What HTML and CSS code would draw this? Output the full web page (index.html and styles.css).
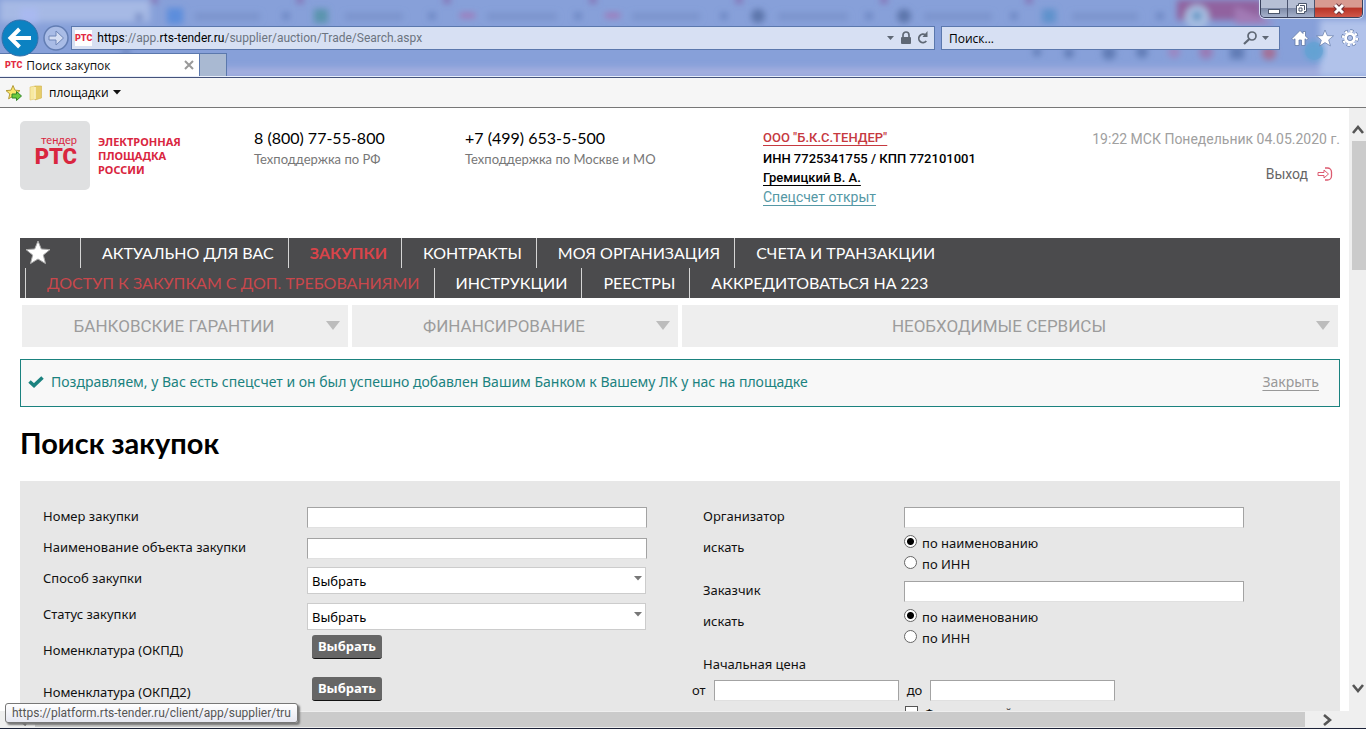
FILE: index.html
```html
<!DOCTYPE html>
<html lang="ru">
<head>
<meta charset="utf-8">
<title>Поиск закупок</title>
<link rel="stylesheet" href="styles.css">
</head>
<body>
<div class="window">
  <header class="chrome">
    <svg class="glass" width="1366" height="77" aria-hidden="true">
      <defs><filter id="soft" x="-20%" y="-20%" width="140%" height="140%"><feGaussianBlur stdDeviation="3"/></filter></defs>
      <g filter="url(#soft)">
        <rect x="0" y="0" width="150" height="22" fill="#b4c4ea" opacity=".7"/>
        <rect x="20" y="8" width="18" height="16" fill="#a9b9f0"/>
        <rect x="167" y="8" width="16" height="16" fill="#5b8ddc"/>
        <rect x="314" y="9" width="14" height="14" fill="#5a94ad"/>
        <rect x="460" y="13" width="15" height="5" fill="#a276b6"/>
        <rect x="605" y="13" width="15" height="5" fill="#a276b6"/>
        <circle cx="758" cy="16" r="7" fill="#5c74aa"/>
        <circle cx="904" cy="16" r="7" fill="#5c74aa"/>
        <rect x="1042" y="9" width="14" height="14" fill="#5e92cc"/>
        <g fill="#7890c9" opacity=".8"><rect x="195" y="13" width="65" height="7"/><rect x="345" y="13" width="58" height="7"/><rect x="487" y="13" width="70" height="7"/><rect x="632" y="13" width="68" height="7"/><rect x="778" y="13" width="70" height="7"/><rect x="924" y="13" width="68" height="7"/><rect x="1072" y="13" width="66" height="7"/></g>
        <g fill="#6680bd" opacity=".8"><circle cx="139" cy="17" r="4"/><circle cx="286" cy="16" r="4"/><circle cx="432" cy="16" r="4"/><circle cx="578" cy="16" r="4"/><circle cx="724" cy="16" r="4"/><circle cx="869" cy="16" r="4"/><circle cx="1014" cy="16" r="4"/><circle cx="1160" cy="16" r="4"/></g>
        <g fill="#8562a6" opacity=".7"><circle cx="154" cy="0" r="4"/><circle cx="300" cy="0" r="4"/><circle cx="447" cy="0" r="4"/><circle cx="593" cy="0" r="4"/><circle cx="739" cy="0" r="4"/><circle cx="884" cy="0" r="4"/><circle cx="1029" cy="0" r="4"/></g>
        <path d="M1177 0H1262V20H1177Z" fill="#91629f"/>
        <path d="M1235 6L1275 24H1235Z" fill="#a27ab5"/>
        <circle cx="1197" cy="17" r="12" fill="#a9bfe2"/>
        <circle cx="1197" cy="16" r="5" fill="#6597c4"/>
        <rect x="0" y="68" width="1366" height="9" fill="#a5afdf"/>
        <rect x="1320" y="20" width="60" height="57" fill="#b1c2ea"/>
        <g fill="#617bb5"><circle cx="1037" cy="52" r="4"/><circle cx="1069" cy="53" r="5"/><circle cx="1109" cy="53" r="7"/><circle cx="1142" cy="52" r="6"/><rect x="1230" y="46" width="14" height="13"/></g>
        <circle cx="1174" cy="52" r="6" fill="#9b87c2"/><circle cx="1206" cy="52" r="7" fill="#997bb6"/><circle cx="1269" cy="53" r="7" fill="#a46f96"/>
        <circle cx="126" cy="52" r="4" fill="#6a83bd"/>
      </g>
      <circle cx="1314" cy="51" r="10" fill="#64a2d3" filter="url(#soft)"/>
      <circle cx="1314" cy="51" r="9" fill="#64a2d3" opacity=".6"/>
    </svg>
    <div class="titlebar">
      <div class="winbtns">
        <button class="winbtn" aria-label="Свернуть"><svg width="14" height="12"><rect x="1.500" y="6.500" width="11" height="4" fill="#fff" stroke="#4b566b"/></svg></button>
        <button class="winbtn" aria-label="Восстановить"><svg width="14" height="14"><path d="M4.500 1.500h8v8h-2v2h-8v-8h2z" fill="#fff" stroke="#4b566b"/><path d="M5 6h3v3H5zM6 3.500h4.500V8" fill="none" stroke="#4b566b"/></svg></button>
        <button class="winbtn winclose" aria-label="Закрыть окно"><svg width="14" height="12"><path d="M3 2L11 10M11 2L3 10" stroke="#6a3339" stroke-width="5"/><path d="M3 2L11 10M11 2L3 10" stroke="#fff" stroke-width="3"/></svg></button>
      </div>
    </div>
    <div class="addrrow">
      <button class="back" aria-label="Назад"><svg width="38" height="38"><circle cx="19" cy="19" r="18" fill="#0c82c2" stroke="#3570ab"/><path d="M9.500 19H30M18.500 10L9.500 19L18.500 28" fill="none" stroke="#fff" stroke-width="4"/></svg></button>
      <button class="forward" aria-label="Вперёд"><svg width="26" height="26"><circle cx="13" cy="13" r="12" fill="#a9bce6" stroke="#627db3" stroke-width="1.500"/><path d="M6 11h7V6l7.500 7-7.500 7v-5H6z" fill="#d5def3" stroke="#6e86b8"/></svg></button>
      <div class="address">
        <span class="favicon">РТС</span>
        <span class="url"><b>https</b>://app.<b>rts-tender.ru</b>/supplier/auction/Trade/Search.aspx</span>
        <button aria-label="Журнал адресов"><svg width="8" height="6"><path d="M0 1h7L3.500 5z" fill="#5f6875"/></svg></button>
        <svg width="12" height="14"><path d="M3 6V4a3 3 0 0 1 6 0v2" fill="none" stroke="#5f6875" stroke-width="1.700"/><rect x="1" y="6" width="10" height="7" rx="1" fill="#5f6875"/></svg>
        <button aria-label="Обновить"><svg width="12" height="14"><path d="M9.300 10A4.200 4.200 0 1 1 8.500 4" fill="none" stroke="#5f6875" stroke-width="1.800"/><path d="M10.500 0v6H5.500z" fill="#5f6875"/></svg></button>
      </div>
      <div class="search">
        <input type="text" value="Поиск..." aria-label="Поиск">
        <button aria-label="Найти"><svg width="15" height="14"><circle cx="9" cy="5" r="4" fill="none" stroke="#5f6875" stroke-width="1.700"/><path d="M6.300 8L1 13" stroke="#5f6875" stroke-width="2.200"/></svg></button>
        <button aria-label="Выбор поиска"><svg width="8" height="6"><path d="M0 1h7L3.500 5z" fill="#5f6875"/></svg></button>
      </div>
      <div class="tools">
        <button aria-label="Домой"><svg width="18" height="18"><path d="M9 1.500L1 9.500l1.500 1.500L4 9.800V16.500h4V11h2.500v5.500H14V9.800l1.500 1.200L17 9.500 14.500 7V2.500h-2.500V4.500z" fill="#fff" stroke="#6279a6" stroke-width=".8"/></svg></button>
        <button aria-label="Избранное"><svg width="18" height="18"><path d="M9 1l2.300 5.600 6.200.3-4.800 4 1.700 6L9 13.600 3.600 17l1.700-6-4.800-4 6.200-.4z" fill="#fff" stroke="#6279a6" stroke-width=".7"/></svg></button>
        <button aria-label="Сервис"><svg width="18" height="18"><circle cx="9" cy="9" r="6.800" fill="none" stroke="#6279a6" stroke-width="3.800" stroke-dasharray="3 2.340"/><circle cx="9" cy="9" r="6.800" fill="none" stroke="#fff" stroke-width="2.600" stroke-dasharray="2.500 2.840"/><circle cx="9" cy="9" r="4.300" fill="none" stroke="#fff" stroke-width="3"/><circle cx="9" cy="9" r="2.600" fill="none" stroke="#6279a6" stroke-width=".8"/></svg></button>
      </div>
    </div>
    <div class="tabs">
      <div class="tab"><span class="favicon">РТС</span><span class="tabname">Поиск закупок</span><button aria-label="Закрыть вкладку"><svg width="10" height="10"><path d="M1 1l8 8M9 1L1 9" stroke="#999" stroke-width="2"/></svg></button></div>
      <button class="newtab" aria-label="Новая вкладка"></button>
    </div>
  </header>
  <div class="favbar">
    <button aria-label="Добавить в избранное"><svg width="18" height="18"><path d="M8 1.500l2 4.700 5 .4-3.800 3.300 1.200 4.900L8 12.200 3.600 14.800l1.200-4.900L1 6.600l5-.4z" fill="#fbe76a" stroke="#b39a38"/><path d="M7 10h4.500V7.500L16.500 12l-5 4.500V14H7z" fill="#6bcb3c" stroke="#33852a"/></svg></button>
    <svg width="14" height="16"><path d="M1 2l5-1v13l-5 1z" fill="#f7e9a0" stroke="#dfc468" stroke-width=".6"/><path d="M6 1h6.500v12L6 15z" fill="#e6cd69" stroke="#d1b24c" stroke-width=".6"/><path d="M6 2v12" stroke="#fff6cf" stroke-width="1.500"/></svg>
    <button class="favfolder">площадки <svg width="8" height="5"><path d="M0 0h8L4 4.500z" fill="#111"/></svg></button>
  </div>
  <div class="viewport">
    <main class="page">
      <div class="head">
        <a class="logo" href="#">
          <span class="badge"><small>тендер</small><strong>РТС</strong></span>
          <span class="slogan">ЭЛЕКТРОННАЯ<br>ПЛОЩАДКА<br>РОССИИ</span>
        </a>
        <div class="phone"><div class="num">8 (800) 77-55-800</div><div class="note">Техподдержка по РФ</div></div>
        <div class="phone"><div class="num">+7 (499) 653-5-500</div><div class="note">Техподдержка по Москве и МО</div></div>
        <div class="firm">
          <a class="firmname" href="#">ООО "Б.К.С.ТЕНДЕР"</a>
          <span>ИНН 7725341755 / КПП 772101001</span>
          <a class="user" href="#">Гремицкий В. А.</a>
          <a class="account" href="#">Спецсчет открыт</a>
        </div>
        <div class="session">
          <span class="clock">19:22 МСК Понедельник 04.05.2020 г.</span>
          <a class="exit" href="#">Выход <svg width="16" height="16"><path d="M8 2h2.500a4 4 0 0 1 4 4v4a4 4 0 0 1-4 4H8" fill="none" stroke="#dc5b70" stroke-width="1.300"/><path d="M1 6.500h6V4l4.500 4L7 12V9.500H1z" fill="#fff" stroke="#dc5b70"/></svg></a>
        </div>
      </div>
      <nav class="menu">
        <div class="row">
          <a class="star" href="#" aria-label="Избранное"><svg width="26" height="26"><path d="M13 1l3.300 8 8.700.6-6.700 5.500 2.200 8.500-7.500-4.600-7.500 4.600 2.200-8.500L1 9.600 9.700 9z" fill="#fff" stroke="#aaa"/></svg></a>
          <a href="#">АКТУАЛЬНО ДЛЯ ВАС</a><a class="current" href="#">ЗАКУПКИ</a><a href="#">КОНТРАКТЫ</a><a href="#">МОЯ ОРГАНИЗАЦИЯ</a><a href="#">СЧЕТА И ТРАНЗАКЦИИ</a>
        </div>
        <div class="row second">
          <a class="accent" href="#">ДОСТУП К ЗАКУПКАМ С ДОП. ТРЕБОВАНИЯМИ</a><a href="#">ИНСТРУКЦИИ</a><a href="#">РЕЕСТРЫ</a><a href="#">АККРЕДИТОВАТЬСЯ НА 223</a>
        </div>
      </nav>
      <div class="services">
        <button><span>БАНКОВСКИЕ ГАРАНТИИ</span><svg width="14" height="10"><path d="M0 0h14L7 9z" fill="#bcbcbc"/></svg></button>
        <button><span>ФИНАНСИРОВАНИЕ</span><svg width="14" height="10"><path d="M0 0h14L7 9z" fill="#bcbcbc"/></svg></button>
        <button class="double"><span>НЕОБХОДИМЫЕ СЕРВИСЫ</span><svg width="14" height="10"><path d="M0 0h14L7 9z" fill="#bcbcbc"/></svg></button>
      </div>
      <div class="notice">
        <svg width="16" height="12"><path d="M1.500 5.500L6 9.500L14.500 1.500" fill="none" stroke="#1b827f" stroke-width="3.600"/></svg>
        <span>Поздравляем, у Вас есть спецсчет и он был успешно добавлен Вашим Банком к Вашему ЛК у нас на площадке</span>
        <a href="#">Закрыть</a>
      </div>
      <h1>Поиск закупок</h1>
      <form class="filters">
        <div class="col left">
          <div class="field"><label for="num">Номер закупки</label><input id="num" type="text"></div>
          <div class="field"><label for="obj">Наименование объекта закупки</label><input id="obj" type="text"></div>
          <div class="field tall"><label for="way">Способ закупки</label><span class="pick"><select id="way"><option>Выбрать</option></select><svg width="8" height="5"><path d="M0 0h8L4 4.500z" fill="#777"/></svg></span></div>
          <div class="field tall"><label for="state">Статус закупки</label><span class="pick"><select id="state"><option>Выбрать</option></select><svg width="8" height="5"><path d="M0 0h8L4 4.500z" fill="#777"/></svg></span></div>
          <div class="field wide"><label for="okpd">Номенклатура (ОКПД)</label><button id="okpd" type="button">Выбрать</button></div>
          <div class="field wide"><label for="okpd2">Номенклатура (ОКПД2)</label><button id="okpd2" type="button">Выбрать</button></div>
        </div>
        <div class="col right">
          <div class="field"><label for="org">Организатор</label><input id="org" type="text"></div>
          <div class="field by"><span class="label">искать</span><div class="radios"><label><input type="radio" name="org" checked>по наименованию</label><label><input type="radio" name="org">по ИНН</label></div></div>
          <div class="field"><label for="cust">Заказчик</label><input id="cust" type="text"></div>
          <div class="field by"><span class="label">искать</span><div class="radios"><label><input type="radio" name="cust" checked>по наименованию</label><label><input type="radio" name="cust">по ИНН</label></div></div>
          <div class="field"><span class="label">Начальная цена</span></div>
          <div class="price"><label for="from">от</label><input id="from" type="text"><label for="to">до</label><input id="to" type="text"></div>
          <label class="check"><input type="checkbox">Федеральный</label>
        </div>
      </form>
    </main>
    <div class="vscroll">
      <svg width="12" height="9"><path d="M1 8L6 2l5 6" fill="none" stroke="#555" stroke-width="2.600"/></svg>
      <div class="vthumb"></div>
      <svg width="12" height="9"><path d="M1 1l5 6 5-6" fill="none" stroke="#555" stroke-width="2.600"/></svg>
    </div>
  </div>
  <div class="hscroll">
    <svg width="9" height="12"><path d="M8 1L2 6l6 5" fill="none" stroke="#555" stroke-width="2.600"/></svg>
    <div class="hthumb"></div>
    <svg width="9" height="12"><path d="M1 1l6 5-6 5" fill="none" stroke="#555" stroke-width="2.600"/></svg>
  </div>
  <div class="status">https://platform.rts-tender.ru/client/app/supplier/tru</div>
</div>
</body>
</html>
```
FILE: styles.css
```css
* { box-sizing: border-box; }
body { margin: 0; font-family: "Noto Sans", "Open Sans", sans-serif; font-size: 13px; color: #111; }
button { font: inherit; padding: 0; border: 0; background: none; display: flex; align-items: center; justify-content: center; }
input { font: inherit; }
svg { flex: none; display: block; }

.window { position: relative; height: 100vh; display: flex; flex-direction: column; overflow: hidden; border-bottom: 1px solid #1c2238; background: #fff; }

/* Browser frame */
.chrome { position: relative; background: #87a0d9; border-bottom: 1px solid #44527a; font-family: "Open Sans", sans-serif; font-size: 12px; }
.glass { position: absolute; left: 0; top: 0; width: 100%; height: 77px; }
.titlebar { position: relative; height: 26px; display: flex; justify-content: flex-end; padding-right: 3px; }
.winbtns { display: flex; height: 18px; border: 1px solid #39415c; border-top: 0; border-radius: 0 0 5px 5px; overflow: hidden; box-shadow: 0 0 0 1px #d3ddf2; }
.winbtn { width: 27px; border-right: 1px solid #4a536d; background: linear-gradient(#b6bfd4 45%, #7f8ba8 50%, #a6b2cc); }
.winclose { width: 47px; border-right: 0; background: linear-gradient(#d89a90 40%, #b93528 50%, #d0584a); }
.addrrow { position: relative; z-index: 1; height: 24px; display: flex; align-items: center; padding: 0 7px 0 1px; }
.back { width: 38px; margin: -7px 4px -7px 0; }
.forward { width: 26px; margin-right: 2px; }
.address, .search { height: 24px; display: flex; align-items: center; border: 1px solid #5b78ad; background: #d7e0f3; }
.address { flex: 1; padding: 0 5px 0 3px; gap: 5px; }
.url { flex: 1; color: #6c7480; white-space: nowrap; font-family: Roboto, sans-serif; }
.url b { font-weight: 400; color: #000; }
.favicon { font: 900 9px Roboto, sans-serif; color: #e22b43; background: #fff; line-height: 16px; }
.search { width: 339px; margin: 0 11px 0 6px; padding: 0 9px 0 7px; gap: 4px; }
.search input { flex: 1; min-width: 0; padding: 0; border: 0; background: none; color: #000; }
.tools { display: flex; gap: 7px; }
.tabs { position: relative; display: flex; height: 27px; padding-top: 3px; border-bottom: 1px solid #e8eefa; }
.tab { width: 200px; display: flex; align-items: center; gap: 4px; padding: 0 5px; background: #fff; border: 1px solid #5b78ad; border-width: 1px 1px 0 0; }
.tabname { flex: 1; }
.newtab { width: 27px; background: #a9b9d2; border: 1px solid #5b78ad; border-width: 1px 1px 0 0; }
.favbar { height: 30px; display: flex; align-items: center; gap: 6px; padding: 0 5px; background: #f6f6f6; border-bottom: 1px solid #777; font-family: "Open Sans", sans-serif; font-size: 12px; }
.favfolder { gap: 4px; }

.viewport { flex: 1; min-height: 0; display: flex; }
.page { flex: 1; min-width: 0; overflow: hidden; padding: 0 9px 0 20px; }

/* Site header */
.head { display: grid; grid-template-columns: 234px 211px 298px 1fr auto; min-height: 130px; padding-top: 13px; }
.logo { display: flex; align-items: center; align-self: start; gap: 8px; color: #d9263f; text-decoration: none; }
.badge { width: 70px; height: 69px; border-radius: 5px; background: #dfe0e1; display: flex; flex-direction: column; align-items: flex-end; padding: 12px 13px 0 0; }
.badge small { font: 11px Lato, sans-serif; line-height: 14px; }
.badge strong { font: 900 22px Roboto, sans-serif; line-height: 20px; }
.slogan { font: 700 11px "Noto Sans", sans-serif; line-height: 14px; }
.phone { padding-top: 7px; }
.num { font: 16px Lato, sans-serif; line-height: 20px; color: #000; }
.note { font: 13px Lato, sans-serif; line-height: 16px; margin-top: 3px; color: #777; }
.firm { display: flex; flex-direction: column; align-items: flex-start; padding-top: 6px; font: 500 13px Roboto, sans-serif; line-height: 20px; color: #000; }
.firm a { color: inherit; text-underline-offset: 3px; }
.firm a.firmname { color: #c6393f; line-height: 22px; }
.firm a.user { line-height: 18px; }
.firm a.account { color: #5598a5; line-height: 20px; font-weight: 400; font-size: 14px; }
.session { display: flex; flex-direction: column; align-items: flex-end; padding-top: 8px; font: 14px Roboto, sans-serif; line-height: 20px; }
.clock { color: #a0a0a0; }
.exit { display: flex; align-items: center; gap: 9px; margin-top: 15px; padding-right: 7px; color: #666; text-decoration: none; }

.menu { background: #4b4b4d; font: 16px Lato, sans-serif; }
.row { display: flex; height: 30px; }
.row a { padding: 0 14px 0 21px; border-right: 1px solid #d5d5d5; color: #fff; line-height: 30px; text-decoration: none; white-space: nowrap; }
.row a:last-child { border-right: 0; }
.row a.star { width: 61px; padding: 2px 0 0 5px; }
.row a.current { color: #d9444a; font-weight: 700; }
.row a.accent { color: #c9474c; border-left: 1px solid #d5d5d5; }
.second { padding-left: 5px; }

.services { display: grid; grid-template-columns: repeat(4, 1fr); gap: 4px; padding: 7px 2px 0; }
.services button { height: 42px; padding: 0 8px 0 0; background: #eee; color: #9c9c9c; font: 17px Roboto, sans-serif; }
.services .double { grid-column: span 2; }
.services span { flex: 1; }

.notice { display: flex; align-items: center; gap: 7px; height: 48px; margin-top: 12px; padding: 0 20px 3px 7px; border: 1px solid #1b827f; background: #f8f8f8; color: #1b827f; font-size: 14px; }
.notice span { flex: 1; }
.notice a { color: #999; text-underline-offset: 3px; }
h1 { margin: 19px 0 21px; font: 700 29px Lato, sans-serif; line-height: 34px; color: #000; }

/* Search form */
.filters { display: grid; grid-template-columns: 1fr 1fr; background: #e7e7e7; padding-top: 20px; min-height: 300px; }
.col { padding-left: 23px; }
.field { display: grid; align-items: start; min-height: 31px; line-height: 20px; }
.left .field { grid-template-columns: 264px 1fr; }
.right .field { grid-template-columns: 201px 1fr; }
.left .tall { min-height: 36px; }
.left .wide { min-height: 42px; }
.right .by { min-height: 43px; }
.field > label, .label { padding-top: 5px; }
input[type="text"] { min-width: 0; }
.field > input, .price input { height: 21px; border: 1px solid #a3a3a3; border-bottom-color: #e0e0e0; background: #fff; }
.field > input { width: 340px; margin-top: 6px; }
.pick { position: relative; width: 339px; margin-top: 4px; }
.pick select { width: 100%; height: 27px; padding: 0 4px; border: 1px solid #ccc; background: #fff; font: inherit; color: #000; appearance: none; }
.pick svg { position: absolute; right: 4px; top: 9px; }
.wide button { width: 70px; height: 24px; margin-left: 5px; padding-bottom: 2px; border-radius: 3px; background: #666; border-bottom: 1px solid #111; color: #fff; font: 700 13px "Noto Sans", sans-serif; }
.radios label { display: flex; gap: 5px; height: 21px; line-height: 22px; }
.radios input { appearance: none; width: 13px; height: 13px; margin: 3px 0 0; border: 1px solid #666; border-radius: 50%; background: #fff; }
.radios input:checked { background: radial-gradient(#000 3px, #fff 4px); }
.price { display: flex; align-items: center; margin-left: -11px; gap: 8px; line-height: 21px; }
.price input { width: 185px; }
.check { display: flex; gap: 6px; margin: 5px 0 0 202px; line-height: 14px; }
.check input { appearance: none; width: 13px; height: 13px; margin: 0; border: 1px solid #555; background: #fff; }

/* Scroll bars and link hint */
.vscroll { width: 17px; background: #efefef; display: flex; flex-direction: column; align-items: center; padding: 17px 0 18px; }
.vthumb { width: 14px; height: 129px; margin: 7px 0 auto 2px; background: #cbcbcb; }
.hscroll { height: 17px; display: flex; align-items: center; background: #efefef; padding: 0 34px 0 18px; }
.hthumb { flex: 1; height: 15px; margin: 0 18px 0 8px; background: #cbcbcb; }
.status { position: absolute; left: 5px; bottom: 5px; height: 20px; padding: 0 6px; border: 1px solid #777; border-radius: 3px; background: linear-gradient(#fff, #e6e7f1); box-shadow: 2px 2px 2px #777; color: #555; font: 12px Roboto, sans-serif; line-height: 18px; }
```
